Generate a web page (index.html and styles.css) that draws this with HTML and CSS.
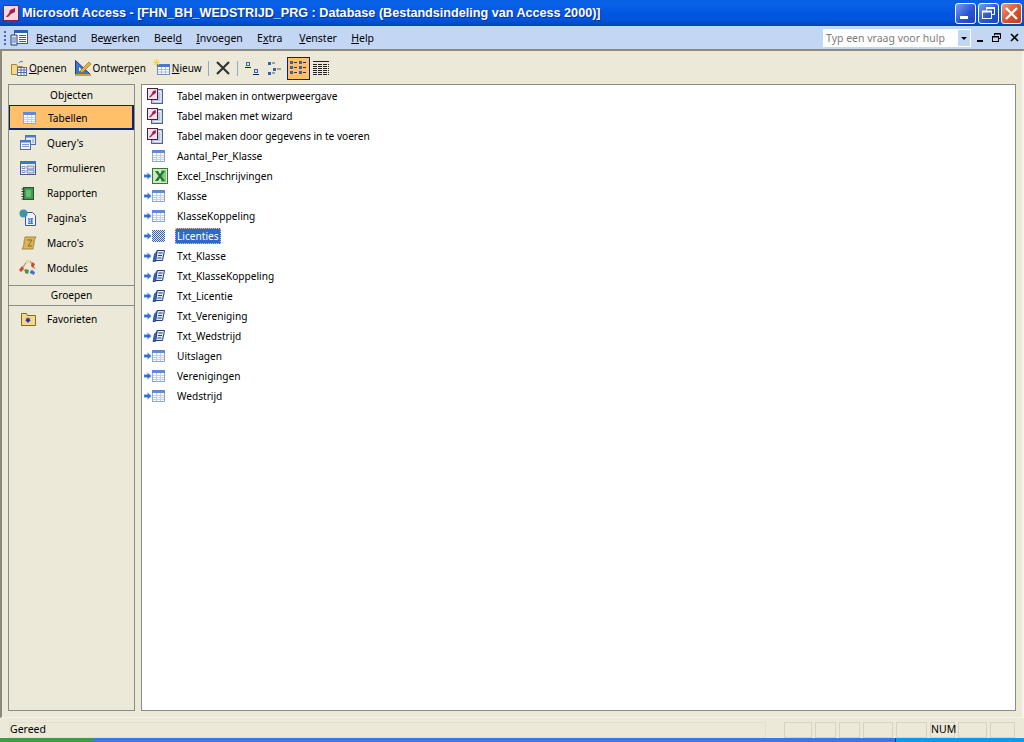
FILE: index.html
```html
<!DOCTYPE html>
<html lang="nl">
<head>
    <meta charset="UTF-8">
    <title>Microsoft Access</title>
    <link rel="stylesheet" href="styles.css">
</head>
<body>
    <svg class="defs" width="0" height="0">
        <defs>
            <pattern id="dither" width="2" height="2" patternUnits="userSpaceOnUse">
                <rect width="2" height="2" fill="#dfe6f5"/>
                <path d="M0 0h1v1H0zM1 1h1v1H1z" fill="#3561b4"/>
            </pattern>
        </defs>
        <symbol id="i-table" viewBox="0 0 13 12">
            <rect x="0.500" y="0.500" width="12" height="11" fill="#fbfcfe" stroke="#8fa8d2"/>
            <rect x="0" y="0" width="13" height="3" fill="#5c8ae0"/>
            <path d="M1 5.500h11M1 7.500h11M1 9.500h11M4.500 3v8M8.500 3v8" stroke="#c3d1ea"/>
        </symbol>
        <symbol id="i-table-sel" viewBox="0 0 13 12">
            <rect width="13" height="12" fill="url(#dither)"/>
        </symbol>
        <symbol id="i-wizard" viewBox="0 0 16 16">
            <rect x="4.500" y="1.500" width="11" height="14" fill="#b9c8e0" stroke="#4d6288"/>
            <path d="M11 3.500h3v10H7" fill="none" stroke="#eef2f9"/>
            <rect x="0.500" y="0.500" width="10" height="11" fill="#eee4ea" stroke="#4c1c38"/>
            <path d="M2.500 9l2.500-3 1-2.500 2.500-1 0 2.500-2.500 1.500-2.500 2.500z" fill="#a3174c" stroke="#a3174c" stroke-width=".6"/>
        </symbol>
        <symbol id="i-excel" viewBox="0 0 16 16">
            <rect x="0.500" y="0.500" width="15" height="15" fill="#cfe6c8" stroke="#2f7d33"/>
            <rect x="9" y="2" width="5" height="12" fill="#8cc585"/>
            <path d="M3 3l3 0 2 3 2-3 3 0-3.500 5 3.500 5-3 0-2-3-2 3-3 0 3.500-5z" fill="#1f7a2c"/>
        </symbol>
        <symbol id="i-link" viewBox="0 0 13 14">
            <path d="M5 1.500h7.500l-2 10h-7z" fill="#e2eaf7" stroke="#1f3f7a"/>
            <path d="M3.500 12.500l-2.500 0 1.500-7.500 2.500-2.500z" fill="#3f6cb8" stroke="#1f3f7a" stroke-width=".8"/>
            <path d="M6.500 4h4M6 6.500h4M5.500 9h4" stroke="#1f3f7a"/>
        </symbol>
        <symbol id="i-arrow" viewBox="0 0 8 8">
            <path d="M0 2.500h3.500V0.500L7.500 4 3.500 7.500V5.500H0z" fill="#2f6fd0" stroke="#bcd2f2" stroke-width=".4"/>
        </symbol>
    </svg>

    <header class="titlebar">
        <svg class="app-icon" width="16" height="16" viewBox="0 0 16 16">
            <rect x="0.500" y="0.500" width="15" height="15" fill="#f2d9de" stroke="#8c1c3c"/>
            <path d="M3 12l3-4 1-3 5-2 0 4-4 2-3 3z" fill="#a3234e"/>
        </svg>
        <span class="title">Microsoft Access - [FHN_BH_WEDSTRIJD_PRG : Database (Bestandsindeling van Access 2000)]</span>
        <div class="win-buttons">
            <button class="win-btn" aria-label="Minimaliseren">
                <svg width="19" height="19" viewBox="0 0 19 19"><rect x="4" y="12" width="8" height="3" fill="#fff"/></svg>
            </button>
            <button class="win-btn" aria-label="Vorig formaat">
                <svg width="19" height="19" viewBox="0 0 19 19" fill="none" stroke="#fff"><path d="M7.500 6.500V3.500h8v7h-3"/><rect x="3.500" y="7.500" width="9" height="7"/><path d="M3 7.500h10M7 4h9" stroke-width="2"/></svg>
            </button>
            <button class="win-btn win-close" aria-label="Sluiten">
                <svg width="19" height="19" viewBox="0 0 19 19"><path d="M4 4l11 11M15 4L4 15" stroke="#fff" stroke-width="2.400"/></svg>
            </button>
        </div>
    </header>

    <nav class="menubar">
        <svg class="grip" width="4" height="18" viewBox="0 0 4 18"><path d="M1 2h2v2H1zM1 6h2v2H1zM1 10h2v2H1zM1 14h2v2H1z" fill="#3d68b0"/></svg>
        <svg class="db-icon" width="18" height="18" viewBox="0 0 18 18">
            <rect x="4.500" y="1.500" width="13" height="13" fill="#fff" stroke="#355c9c"/>
            <rect x="4" y="1" width="14" height="3" fill="#2f5fb0"/>
            <path d="M9 6.500h7M9 8.500h7M9 10.500h7M9 12.500h7" stroke="#355c9c"/>
            <path d="M1 6h6v10H1z" fill="#dfe8f7" stroke="#203f78"/>
            <path d="M2 9h4M2 11h4M2 13h4" stroke="#5078be"/>
        </svg>
        <a class="menu-item"><u>B</u>estand</a>
        <a class="menu-item">Be<u>w</u>erken</a>
        <a class="menu-item">Beel<u>d</u></a>
        <a class="menu-item"><u>I</u>nvoegen</a>
        <a class="menu-item menu-wide">E<u>x</u>tra</a>
        <a class="menu-item"><u>V</u>enster</a>
        <a class="menu-item"><u>H</u>elp</a>
        <div class="help-box">
            <span class="help-text">Typ een vraag voor hulp</span>
            <span class="help-drop"></span>
        </div>
        <div class="doc-buttons">
            <svg width="12" height="12" viewBox="0 0 12 12"><rect x="2" y="8" width="6" height="2" fill="#000"/></svg>
            <svg width="12" height="12" viewBox="0 0 12 12" fill="none" stroke="#000"><path d="M3.500 3.500V1.500h6v5H7.500"/><rect x="1.500" y="4.500" width="6" height="5"/><path d="M3 2h7M1 5h7" /></svg>
            <svg class="doc-close" width="12" height="12" viewBox="0 0 12 12"><path d="M2 2l7 7M9 2l-7 7" stroke="#000" stroke-width="1.600"/></svg>
        </div>
    </nav>

    <div class="workspace">
        <div class="toolbar">
            <button class="tool">
                <svg width="18" height="18" viewBox="0 0 18 18">
                    <path d="M1.500 5.500h5l1 2h5v8h-11z" fill="#f3d98c" stroke="#a8853a"/>
                    <path d="M9 4c1-2 3-2 4-1" fill="none" stroke="#5078be"/>
                    <rect x="7.500" y="8.500" width="9" height="8" fill="#fff" stroke="#4a6ea8"/>
                    <path d="M8 11h8M8 13.500h8M11 9v7M14 9v7" stroke="#4a6ea8"/>
                </svg>
                <span><u>O</u>penen</span>
            </button>
            <button class="tool">
                <svg width="18" height="18" viewBox="0 0 18 18">
                    <path d="M1.500 1.500v14h15z" fill="#3f74c8" stroke="#1f3f7a"/>
                    <path d="M5 12V8l4 4z" fill="#f3eee0"/>
                    <path d="M1 16h16" stroke="#c8a13a" stroke-width="2"/>
                    <path d="M7 11l8-8 2 2-8 8-3 1z" fill="#e8b23c" stroke="#8a6a20" stroke-width=".7"/>
                </svg>
                <span>Ontwer<u>p</u>en</span>
            </button>
            <button class="tool tool-last">
                <svg width="18" height="18" viewBox="0 0 18 18">
                    <rect x="4.500" y="5.500" width="12" height="10" fill="#fff" stroke="#6f8fc4"/>
                    <rect x="4" y="5" width="13" height="3" fill="#4a78c8"/>
                    <path d="M5 10.500h11M5 13h11M8.500 8v7M12.500 8v7" stroke="#a9bcdc"/>
                    <path d="M3.500 0v7M0 3.500h7M1 1l5 5M6 1L1 6" stroke="#f4d24a"/>
                </svg>
                <span><u>N</u>ieuw</span>
            </button>
            <span class="tool-sep"></span>
            <button class="tool tool-icon">
                <svg width="16" height="16" viewBox="0 0 16 16"><path d="M2 2l12 12M14 2L2 14" stroke="#333" stroke-width="2.200"/></svg>
            </button>
            <span class="tool-sep"></span>
            <button class="tool tool-icon">
                <svg width="16" height="16" viewBox="0 0 16 16" fill="none">
                    <rect x="2.500" y="2.500" width="3" height="3" stroke="#2f62b8"/><path d="M1 7.500h6" stroke="#1a1a6a"/>
                    <rect x="10.500" y="9.500" width="3" height="3" stroke="#2f62b8"/><path d="M9 14.500h6" stroke="#1a1a6a"/>
                </svg>
            </button>
            <button class="tool tool-icon">
                <svg width="16" height="16" viewBox="0 0 16 16">
                    <path d="M1 2h3v3H1zM6 8h3v3H6zM1 12h3v3H1z" fill="#2f62b8"/>
                    <path d="M5 3h3M10 9h4M5 13h3" stroke="#555"/>
                </svg>
            </button>
            <button class="tool tool-icon tool-on">
                <svg width="16" height="14" viewBox="0 0 16 14">
                    <path d="M0 0h3v3H0zM9 0h3v3H9zM0 5h3v3H0zM9 5h3v3H9zM0 10h3v3H0zM9 10h3v3H9z" fill="#2f62b8"/>
                    <path d="M4 1.500h3M13 1.500h3M4 6.500h3M13 6.500h3M4 11.500h3M13 11.500h3" stroke="#333"/>
                </svg>
            </button>
            <button class="tool tool-icon">
                <svg width="16" height="14" viewBox="0 0 16 14">
                    <path d="M0 .5h16" stroke="#222"/>
                    <path d="M0 3.500h16M0 5.500h16M0 7.500h16M0 9.500h16M0 11.500h16M0 13.500h16" stroke="#222" stroke-dasharray="4 1"/>
                </svg>
            </button>
        </div>

        <div class="panes">
            <aside class="sidebar">
                <div class="side-head">Objecten</div>
                <a class="side-item side-on"><svg width="13" height="12"><use href="#i-table"/></svg><span>Tabellen</span></a>
                <a class="side-item">
                    <svg width="18" height="18" viewBox="0 0 18 18">
                        <rect x="6.500" y="1.500" width="10" height="9" fill="#e4ebf7" stroke="#4a6ea8"/><rect x="6" y="1" width="11" height="2.500" fill="#4a78c8"/>
                        <rect x="1.500" y="6.500" width="10" height="9" fill="#f0f3fa" stroke="#4a6ea8"/><rect x="1" y="6" width="11" height="2.500" fill="#4a78c8"/>
                        <path d="M3 10.500h7M3 12.500h7M13 6h2M13 8h2" stroke="#7f97c2"/>
                    </svg>
                    <span>Query's</span>
                </a>
                <a class="side-item">
                    <svg width="18" height="18" viewBox="0 0 18 18">
                        <rect x="1.500" y="2.500" width="15" height="13" fill="#f2f4f9" stroke="#3d5a8c"/><rect x="1" y="2" width="16" height="3" fill="#3f74c8"/>
                        <path d="M3 7.500h3v2H3zM3 11.500h3v2H3z" fill="#fff" stroke="#3d5a8c" stroke-width=".6"/>
                        <path d="M8 7h7v3H8zM8 11h7v3H8z" fill="#d9dfe9" stroke="#3d5a8c" stroke-width=".6"/>
                    </svg>
                    <span>Formulieren</span>
                </a>
                <a class="side-item">
                    <svg width="18" height="18" viewBox="0 0 18 18">
                        <rect x="4.500" y="3.500" width="10" height="12" fill="#3f9a50" stroke="#1d5a2c"/>
                        <rect x="7" y="6" width="5" height="7" fill="#67bd72"/>
                        <path d="M2.500 5h3M2.500 7.500h3M2.500 10h3M2.500 12.500h3M2.500 15h3" stroke="#333"/>
                    </svg>
                    <span>Rapporten</span>
                </a>
                <a class="side-item">
                    <svg width="18" height="18" viewBox="0 0 18 18">
                        <path d="M6.500 3.500h7l3 3v10h-10z" fill="#f0f4fb" stroke="#3d5a8c"/>
                        <path d="M9 9h5v6H9z" fill="#5078be"/><path d="M9 11h5M9 13h5M11 9v6" stroke="#dfe8f7" stroke-dasharray="1 1"/>
                        <circle cx="4.500" cy="4.500" r="4" fill="#3f8ed0"/><path d="M2 2l3 1 1 2-3 2z" fill="#3fa54a"/>
                    </svg>
                    <span>Pagina's</span>
                </a>
                <a class="side-item">
                    <svg width="18" height="18" viewBox="0 0 18 18">
                        <path d="M6 3h11c-1 2-2 3-2 6s-1 4-1 6H3c1-2 2-3 2-6s1-4 1-6z" fill="#d9b45a" stroke="#a8853a"/>
                        <path d="M8 6h5L9 12h4" fill="none" stroke="#8a6a20"/>
                    </svg>
                    <span>Macro's</span>
                </a>
                <a class="side-item">
                    <svg width="18" height="18" viewBox="0 0 18 18">
                        <path d="M8 2l-5 8M11 2l5 8M5 11l3 3M14 11l-3 3" stroke="#b4a27a" stroke-width="1.400"/>
                        <path d="M7 1l3 0 0 3-3 1z" fill="#e8d9a0"/>
                        <path d="M13 3l3 2-2 4-2-2z" fill="#d9432e"/>
                        <path d="M3 7l2 3-3 3-2-2z" fill="#d9432e"/>
                        <path d="M6 10l4 1-1 4-3-1z" fill="#3f9a50"/>
                        <path d="M12 11l4 2-1 3-4-2z" fill="#3f74c8"/>
                    </svg>
                    <span>Modules</span>
                </a>
                <div class="side-head side-group">Groepen</div>
                <a class="side-item">
                    <svg width="18" height="18" viewBox="0 0 18 18">
                        <path d="M2.500 3.500h5l1 2h8v10h-14z" fill="#f3d98c" stroke="#8a6a20"/>
                        <path d="M9 7l.8 1.700 1.700-.4-.9 1.700 1.400 1-1.800.3-.2 1.700-1-1.300-1 1.300-.2-1.700-1.800-.3 1.400-1-.9-1.700 1.700.4z" fill="#2a2aa0"/>
                    </svg>
                    <span>Favorieten</span>
                </a>
            </aside>

            <main class="objects">
                <div class="obj-row"><div class="obj-icons"><svg class="wizard" width="16" height="16"><use href="#i-wizard"/></svg></div><span class="obj-name">Tabel maken in ontwerpweergave</span></div>
                <div class="obj-row"><div class="obj-icons"><svg class="wizard" width="16" height="16"><use href="#i-wizard"/></svg></div><span class="obj-name">Tabel maken met wizard</span></div>
                <div class="obj-row"><div class="obj-icons"><svg class="wizard" width="16" height="16"><use href="#i-wizard"/></svg></div><span class="obj-name">Tabel maken door gegevens in te voeren</span></div>
                <div class="obj-row"><div class="obj-icons"><i class="link-slot"></i><svg width="13" height="12"><use href="#i-table"/></svg></div><span class="obj-name">Aantal_Per_Klasse</span></div>
                <div class="obj-row"><div class="obj-icons"><svg class="link-slot" width="8" height="8"><use href="#i-arrow"/></svg><svg width="16" height="16"><use href="#i-excel"/></svg></div><span class="obj-name">Excel_Inschrijvingen</span></div>
                <div class="obj-row"><div class="obj-icons"><svg class="link-slot" width="8" height="8"><use href="#i-arrow"/></svg><svg width="13" height="12"><use href="#i-table"/></svg></div><span class="obj-name">Klasse</span></div>
                <div class="obj-row"><div class="obj-icons"><svg class="link-slot" width="8" height="8"><use href="#i-arrow"/></svg><svg width="13" height="12"><use href="#i-table"/></svg></div><span class="obj-name">KlasseKoppeling</span></div>
                <div class="obj-row"><div class="obj-icons"><svg class="link-slot" width="8" height="8"><use href="#i-arrow"/></svg><svg width="13" height="12"><use href="#i-table-sel"/></svg></div><span class="obj-name obj-sel">Licenties</span></div>
                <div class="obj-row"><div class="obj-icons"><svg class="link-slot" width="8" height="8"><use href="#i-arrow"/></svg><svg width="13" height="14"><use href="#i-link"/></svg></div><span class="obj-name">Txt_Klasse</span></div>
                <div class="obj-row"><div class="obj-icons"><svg class="link-slot" width="8" height="8"><use href="#i-arrow"/></svg><svg width="13" height="14"><use href="#i-link"/></svg></div><span class="obj-name">Txt_KlasseKoppeling</span></div>
                <div class="obj-row"><div class="obj-icons"><svg class="link-slot" width="8" height="8"><use href="#i-arrow"/></svg><svg width="13" height="14"><use href="#i-link"/></svg></div><span class="obj-name">Txt_Licentie</span></div>
                <div class="obj-row"><div class="obj-icons"><svg class="link-slot" width="8" height="8"><use href="#i-arrow"/></svg><svg width="13" height="14"><use href="#i-link"/></svg></div><span class="obj-name">Txt_Vereniging</span></div>
                <div class="obj-row"><div class="obj-icons"><svg class="link-slot" width="8" height="8"><use href="#i-arrow"/></svg><svg width="13" height="14"><use href="#i-link"/></svg></div><span class="obj-name">Txt_Wedstrijd</span></div>
                <div class="obj-row"><div class="obj-icons"><svg class="link-slot" width="8" height="8"><use href="#i-arrow"/></svg><svg width="13" height="12"><use href="#i-table"/></svg></div><span class="obj-name">Uitslagen</span></div>
                <div class="obj-row"><div class="obj-icons"><svg class="link-slot" width="8" height="8"><use href="#i-arrow"/></svg><svg width="13" height="12"><use href="#i-table"/></svg></div><span class="obj-name">Verenigingen</span></div>
                <div class="obj-row"><div class="obj-icons"><svg class="link-slot" width="8" height="8"><use href="#i-arrow"/></svg><svg width="13" height="12"><use href="#i-table"/></svg></div><span class="obj-name">Wedstrijd</span></div>
            </main>
        </div>
    </div>

    <footer class="statusbar">
        <span class="status-text">Gereed</span>
        <span class="cell cell-w28"></span>
        <span class="cell cell-w21"></span>
        <span class="cell cell-w21"></span>
        <span class="cell cell-w30"></span>
        <span class="cell cell-w31"></span>
        <span class="cell cell-w25">NUM</span>
        <span class="cell cell-w29"></span>
        <span class="cell cell-w25"></span>
    </footer>
    <div class="taskbar"><span class="start"></span><span class="task-mid"></span><span class="task-tray"></span></div>
</body>
</html>
```

FILE: styles.css
```css
* {
    box-sizing: border-box;
}

html, body {
    margin: 0;
    height: 100%;
}

body {
    display: flex;
    flex-direction: column;
    width: 1024px;
    height: 742px;
    overflow: hidden;
    background: #ece9d8;
    font-family: "Noto Sans", "Open Sans", sans-serif;
    font-size: 10.5px;
    color: #000;
}

.defs {
    position: absolute;
}

button {
    font: inherit;
    color: inherit;
    border: none;
    background: none;
    padding: 0;
}

/* title bar */
.titlebar {
    display: flex;
    align-items: center;
    height: 26px;
    padding: 0 2px 0 3px;
    background: linear-gradient(to bottom, #0a5fe0 0, #0a62ea 3px, #0258e2 12px, #0054dc 20px, #0145b8 26px);
}

.app-icon {
    flex: none;
}

.title {
    margin-left: 3px;
    font-family: "Liberation Sans", sans-serif;
    font-size: 12.62px;
    font-weight: bold;
    color: #fff;
    white-space: nowrap;
    text-shadow: 1px 1px 0 #0a2f8c;
}

.win-buttons {
    display: flex;
    gap: 2px;
    margin-left: auto;
}

.win-btn {
    width: 21px;
    height: 21px;
    border: 1px solid #fff;
    border-radius: 3px;
    background: linear-gradient(135deg, #7a9ee8, #2a56d6 55%, #1c44bc);
    display: flex;
    align-items: center;
    justify-content: center;
}

.win-close {
    background: linear-gradient(135deg, #eb9a7c, #d8522e 55%, #c03a18);
}

/* menu bar */
.menubar {
    display: flex;
    align-items: center;
    height: 25px;
    padding-left: 3px;
    background: #c3d7f5;
    border-bottom: 2px solid #8c8a7e;
}

.grip {
    margin-right: 3px;
}

.db-icon {
    margin-right: 8px;
}

.menu-item {
    margin-right: 14.3px;
    white-space: nowrap;
}

.menu-wide {
    margin-right: 17px;
}

.help-box {
    display: flex;
    align-items: center;
    justify-content: space-between;
    width: 148px;
    height: 18px;
    margin-left: auto;
    background: #fff;
    border: 1px solid #fff;
}

.help-text {
    padding-left: 2px;
    color: #7c7c7c;
}

.help-drop {
    width: 12px;
    height: 16px;
    background: #c3d7f5;
    position: relative;
}

.help-drop::after {
    content: "";
    position: absolute;
    left: 3px;
    top: 7px;
    border: 3px solid transparent;
    border-top: 3px solid #000;
}

.doc-buttons {
    display: flex;
    gap: 4px;
    margin: 0 3px 0 4px;
}

.doc-close {
    margin-left: 2px;
}

/* beige document area */
.workspace {
    flex: 1;
    display: flex;
    flex-direction: column;
    margin-bottom: 2px;
    padding: 0 6px 6px 8px;
    border-left: 2px solid #8c8a7e;
    border-right: 2px solid #f5f3ea;
    border-bottom: 1px solid #f5f3ea;
}

.toolbar {
    display: flex;
    align-items: center;
    height: 33px;
    padding-top: 1px;
    font-size: 10px;
}

.tool {
    display: flex;
    align-items: center;
    gap: 1px;
    white-space: nowrap;
    margin-right: 7px;
}

.tool-last {
    margin-right: 4px;
}

.tool-icon {
    justify-content: center;
    flex: none;
    width: 23px;
    height: 23px;
    margin-right: 0;
    border: 1px solid transparent;
}

.tool-on {
    background: #ffc069;
    border-color: #0a246a;
}

.tool-sep {
    width: 1px;
    height: 15px;
    margin: 0 3px 0 2px;
    background: #8fa9d6;
}

.panes {
    flex: 1;
    display: flex;
    gap: 6px;
    min-height: 0;
    margin-left: -2px;
    font-size: 10.15px;
}

/* objects sidebar */
.sidebar {
    flex: none;
    width: 127px;
    background: #ece9d8;
    border: 1px solid #8c8c84;
}

.side-head {
    height: 20px;
    line-height: 20px;
    text-align: center;
}

.side-group {
    height: 21px;
    line-height: 19px;
    margin-top: 5px;
    border-top: 1px solid #8c8c84;
    border-bottom: 1px solid #8c8c84;
}

.side-item {
    display: flex;
    align-items: center;
    gap: 10px;
    height: 25px;
    padding-left: 10px;
}

.side-item svg {
    flex: none;
}

.side-on {
    gap: 12px;
    width: 125px;
    padding: 1px 0 0 13px;
    background: #ffc069;
    border: 1px solid #0a246a;
    border-width: 1px 2px 2px 1px;
}

/* list of objects */
.objects {
    flex: 1;
    padding: 1px 0 0 2px;
    background: #fff;
    border: 1px solid #8c8c84;
}

.obj-row {
    display: flex;
    align-items: center;
    height: 20px;
}

.obj-icons {
    display: flex;
    align-items: center;
    flex: none;
    width: 31px;
}

.wizard {
    margin-left: 3px;
}

.link-slot {
    display: block;
    flex: none;
    width: 8px;
}

.obj-name {
    padding: 1px 2px;
    white-space: nowrap;
}

.obj-sel {
    background: #316ac5;
    color: #fff;
    outline: 1px dotted #ffc069;
    outline-offset: -1px;
}

/* status bar */
.statusbar {
    display: flex;
    align-items: stretch;
    gap: 3px;
    height: 18px;
    padding: 2px 8px 0 9px;
    background: #ece9d8;
    flex: none;
}

.status-text {
    width: 757px;
    margin-right: 15px;
    line-height: 13px;
    border: 1px solid #e2dfcf;
}

.cell {
    border: 1px solid #d6d3c4;
    text-align: center;
    line-height: 13px;
}

.cell-w21 { width: 21px; }
.cell-w25 { width: 25px; }
.cell-w28 { width: 28px; }
.cell-w29 { width: 29px; }
.cell-w30 { width: 30px; }
.cell-w31 { width: 31px; }

.taskbar {
    display: flex;
    flex: none;
    height: 4px;
}

.start {
    width: 93px;
    background: #3f9a42;
}

.task-mid {
    flex: 1;
    background: #3a7ae0;
}

.task-tray {
    width: 129px;
    background: #0f9ae6;
    border-left: 1px solid #0a3c8c;
}
```
